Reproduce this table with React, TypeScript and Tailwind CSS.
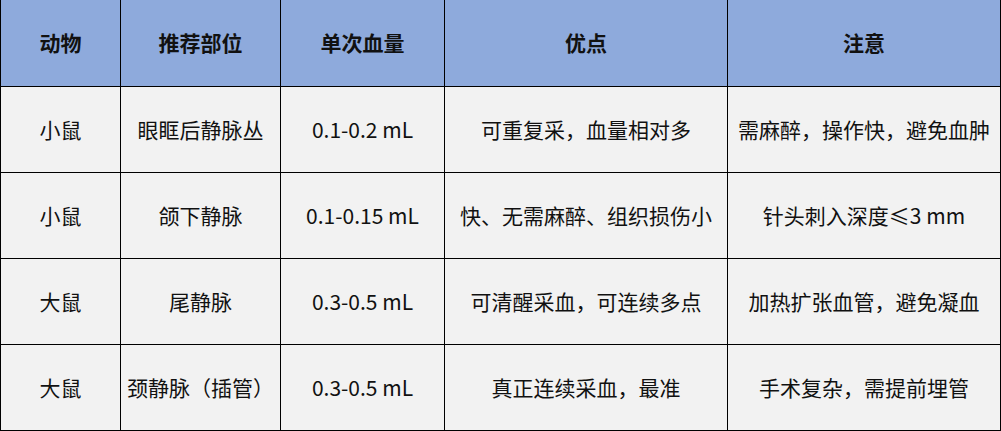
import React from "react";

const rows = [
  ["小鼠", "眼眶后静脉丛", "0.1-0.2 mL", "可重复采，血量相对多", "需麻醉，操作快，避免血肿"],
  ["小鼠", "颌下静脉", "0.1-0.15 mL", "快、无需麻醉、组织损伤小", "针头刺入深度≤3 mm"],
  ["大鼠", "尾静脉", "0.3-0.5 mL", "可清醒采血，可连续多点", "加热扩张血管，避免凝血"],
  ["大鼠", "颈静脉（插管）", "0.3-0.5 mL", "真正连续采血，最准", "手术复杂，需提前埋管"],
];

const head = ["动物", "推荐部位", "单次血量", "优点", "注意"];

const App = () => {
  return (
    <div
      className="w-[1001px] h-[431px] bg-white"
      style={{ fontFamily: '"Noto Sans CJK SC", "Noto Sans", sans-serif' }}
    >
      <div className="grid w-[1001px] grid-cols-[119px_159px_163px_282px_272px] grid-rows-[86px_85px_85px_85px_85px] gap-px bg-black px-px pb-px text-[21px] text-[#111]">
        {head.map((h) => (
          <div key={h} className="flex items-center justify-center bg-[#8eaadc] font-bold">
            {h}
          </div>
        ))}
        {rows.map((r, i) =>
          r.map((c, j) => (
            <div key={i + "-" + j} className="flex items-center justify-center bg-[#f2f2f2]">
              {c}
            </div>
          ))
        )}
      </div>
    </div>
  );
};

export default App;
